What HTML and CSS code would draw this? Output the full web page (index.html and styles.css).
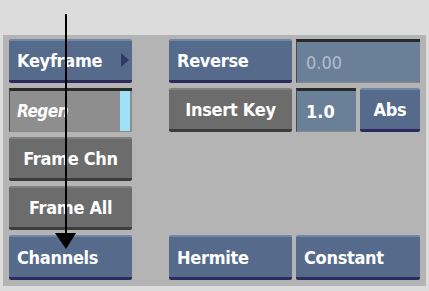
FILE: index.html
```html
<!DOCTYPE html>
<html lang="en">
<head>
<meta charset="UTF-8">
<title>Keyframe panel</title>
<link rel="stylesheet" href="styles.css">
</head>
<body>

<div class="panel">
  <div class="btn blue menu">Keyframe<span class="tri"></span></div>
  <div class="btn blue">Reverse</div>
  <div class="field dim">0.00</div>

  <div class="field regen"><i>Regen</i><span class="cyan"></span></div>
  <div class="btn gray center">Insert Key</div>
  <div class="pair">
    <div class="field">1.0</div>
    <div class="btn blue center">Abs</div>
  </div>

  <div class="btn gray center">Frame Chn</div>
  <div></div>
  <div></div>

  <div class="btn gray center">Frame All</div>
  <div></div>
  <div></div>

  <div class="btn blue">Channels</div>
  <div class="btn blue">Hermite</div>
  <div class="btn blue">Constant</div>
</div>

<!-- pointer arrow over the panel -->
<svg class="arrow" width="30" height="240" viewBox="0 0 30 240">
  <rect x="10" y="0" width="2" height="222" fill="#000"/>
  <polygon points="0,219 21,219 11,235" fill="#000"/>
</svg>

</body>
</html>
```

FILE: styles.css
```css
body {
  margin: 0;
  background: #dcdcdc;
  font-family: "DejaVu Sans Condensed", "DejaVu Sans", sans-serif;
  font-weight: bold;
  font-size: 18px;
  color: #fff;
}
.panel {
  position: relative;
  margin: 35px 0 0 3px;
  width: 423px;
  height: 251px;
  box-sizing: border-box;
  padding: 4px 0 0 6px;
  background: #b4b4b4;
  display: grid;
  grid-template-columns: 156px 123px 124px;
  grid-template-rows: 44px 44px 44px 44px 45px;
  column-gap: 4px;
  row-gap: 5px;
}
/* first column is narrower than its track: the track holds the gap */
.panel > :nth-child(3n+1) {
  width: 123px;
}
.btn {
  box-sizing: border-box;
  border-radius: 2px;
  display: flex;
  align-items: center;
  padding: 0 8px;
  white-space: nowrap;
  letter-spacing: -0.3px;
}
.blue {
  background: #566b8c;
  border-top: 2px solid #7187a6;
  border-bottom: 3px solid #2c2b5d;
}
.gray {
  background: #6c6c6c;
  border-top: 2px solid #808080;
  border-bottom: 3px solid #3c3c3c;
}
.center {
  justify-content: center;
}
.menu {
  position: relative;
}
.tri {
  position: absolute;
  right: 3px;
  top: 12px;
  width: 0;
  height: 0;
  border-top: 7px solid transparent;
  border-bottom: 7px solid transparent;
  border-left: 8px solid #2f3967;
}
.field {
  box-sizing: border-box;
  background: #6a8099;
  border-top: 3px solid #2a2a2a;
  border-left: 1px solid #4a4a4a;
  border-bottom: 1px solid #8a8a8a;
  display: flex;
  align-items: center;
  padding: 0 9px;
  font-weight: normal;
}
.field.dim {
  color: #b2bccb;
}
.pair .field {
  font-weight: bold;
}
.regen {
  position: relative;
  background: #8e8e8e;
  padding-left: 7px;
}
.regen i {
  font-weight: bold;
  font-size: 17px;
  letter-spacing: -0.5px;
}
.cyan {
  position: absolute;
  right: 2px;
  top: 0;
  bottom: 0;
  width: 10px;
  background: #9ee2f7;
}
.pair {
  display: grid;
  grid-template-columns: 60px 60px;
  column-gap: 4px;
}
.arrow {
  position: absolute;
  left: 55px;
  top: 14px;
}
```
